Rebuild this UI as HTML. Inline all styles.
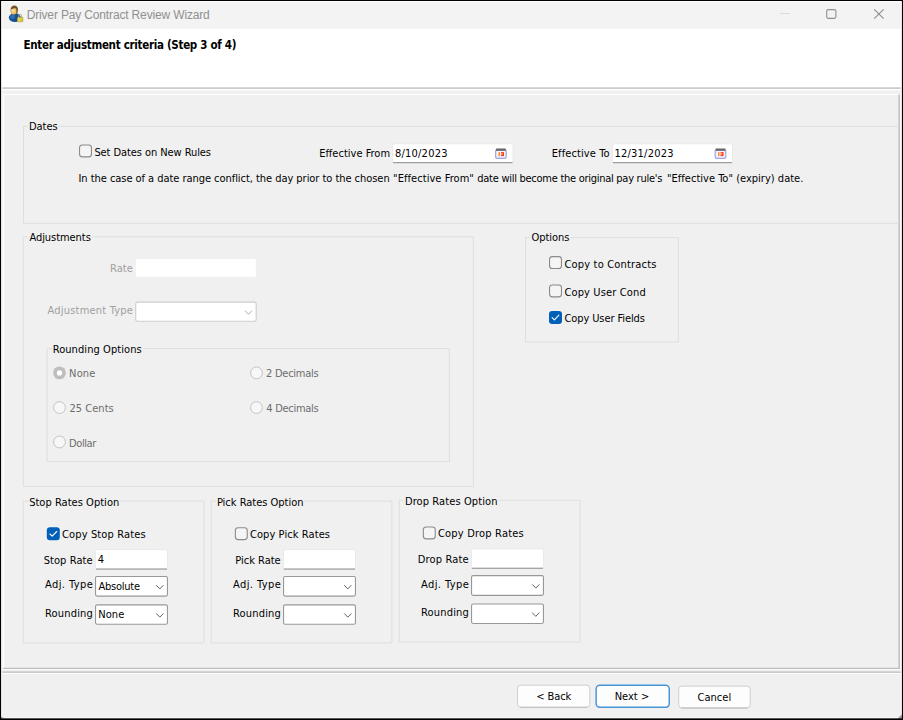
<!DOCTYPE html>
<html lang="en"><head><meta charset="utf-8"><title>Driver Pay Contract Review Wizard</title>
<style>
html,body{margin:0;padding:0;}
body{width:903px;height:720px;position:relative;overflow:hidden;background:#f0f0f0;}
#w{position:absolute;left:0;top:0;width:903px;height:720px;overflow:hidden;}
#w svg{position:absolute;left:0;top:0;display:block;}
#w span{position:absolute;display:block;white-space:nowrap;line-height:16px;height:16px;font-family:'DejaVu Sans Condensed','DejaVu Sans','Liberation Sans',sans-serif;font-size:11px;font-stretch:condensed;color:#000;}
</style></head><body><div id="w">
<svg width="903" height="720" viewBox="0 0 903 720">
<rect x="0" y="0" width="903" height="29" fill="#f3f3f3" />
<rect x="0" y="29" width="903" height="58.4" fill="#fff" />
<rect x="1" y="87.4" width="900" height="1.5" fill="#c2c2c2" />
<rect x="1" y="88.9" width="900" height="1.3" fill="#fff" />
<rect x="3" y="94" width="896" height="1" fill="#fff" />
<rect x="3" y="94" width="1" height="575" fill="#fff" />
<rect x="898.5" y="94.5" width="1.4" height="574.5" fill="#b8b8b8" />
<rect x="899.9" y="94" width="1" height="575" fill="#fafafa" />
<rect x="3" y="667.8" width="897" height="1.2" fill="#bdbdbd" />
<rect x="3" y="669" width="897" height="1" fill="#fafafa" />
<rect x="1" y="671.6" width="900.5" height="1.2" fill="#b0b0b0" />
<rect x="1" y="672.8" width="900.5" height="1.2" fill="#fff" />
<rect x="1" y="717.2" width="901" height="1.2" fill="#fafafa" />
<g transform="translate(8 5)"><ellipse cx="6.8" cy="12.6" rx="6" ry="4.3" fill="#164f8e"/><ellipse cx="4.6" cy="11.8" rx="2.6" ry="2.2" fill="#3578c0" opacity="0.75"/><ellipse cx="6.3" cy="5.1" rx="3.7" ry="4.5" fill="#7a5a2c"/><ellipse cx="5.7" cy="6.1" rx="2.7" ry="3.4" fill="#efc470"/><ellipse cx="5.2" cy="5.4" rx="1.4" ry="1.6" fill="#f8dc98"/><path d="M2.7 4.2 Q6.3 -0.8 10 3.8 Q7.6 2.6 5.6 3.4 Q3.8 3.8 2.7 4.2Z" fill="#6a4c22"/><path d="M10.7 12.6 v-1.7 a1.5 1.5 0 0 1 3 0 v1.7" fill="none" stroke="#a8a890" stroke-width="0.9"/><rect x="9.4" y="12.3" width="5.5" height="4.5" rx="0.6" fill="#dccb3a" stroke="#9f9326" stroke-width="0.5"/><rect x="10" y="12.9" width="1.6" height="3.3" fill="#f0e478" opacity="0.8"/></g>
<path d="M780 13.5 H790" stroke="#dadada" stroke-width="1"/><rect x="826.7" y="9.6" width="9.2" height="8.8" rx="1.6" fill="none" stroke="#8f8f8f" stroke-width="1.1"/><path d="M874.2 9.3 L883.6 18.7 M883.6 9.3 L874.2 18.7" stroke="#8a8a8a" stroke-width="1.05"/>
<path d="M28 126.3 H23.5 V223.3 H899 M58.5 126.3 H899" fill="none" stroke="#dedede" stroke-width="1"/>
<rect x="79.55" y="144.95" width="11.9" height="11.9" rx="2.8" fill="#f5f5f5" stroke="#8a8a8a" stroke-width="1.1"/>
<rect x="392.5" y="143.8" width="120.5" height="19" rx="2" fill="#fff" stroke="#e6e6e6" stroke-width="0.8"/>
<rect x="393" y="162.1" width="119.5" height="1.1" fill="#949494" />
<g transform="translate(495 148)"><rect x="0.6" y="1.6" width="10.6" height="8.8" rx="1.3" fill="#e6e9fb" stroke="#a6a6de" stroke-width="1.2"/><rect x="1.2" y="0.1" width="9.4" height="1" fill="#b4ae9c"/><rect x="1" y="0.9" width="9.8" height="2" fill="#6a6a74"/><rect x="2" y="3.3" width="7.8" height="4.6" fill="#fdfdff"/><rect x="3.5" y="4.1" width="1.4" height="3.9" fill="#ff7a30"/><rect x="5.9" y="4.1" width="3.1" height="3.9" fill="#ff3b10"/><rect x="5.9" y="5.3" width="1.7" height="1.2" fill="#ffd8c8"/></g>
<rect x="612.5" y="143.8" width="120" height="19" rx="2" fill="#fff" stroke="#e6e6e6" stroke-width="0.8"/>
<rect x="613" y="162.1" width="119" height="1.1" fill="#949494" />
<g transform="translate(714.6 148)"><rect x="0.6" y="1.6" width="10.6" height="8.8" rx="1.3" fill="#e6e9fb" stroke="#a6a6de" stroke-width="1.2"/><rect x="1.2" y="0.1" width="9.4" height="1" fill="#b4ae9c"/><rect x="1" y="0.9" width="9.8" height="2" fill="#6a6a74"/><rect x="2" y="3.3" width="7.8" height="4.6" fill="#fdfdff"/><rect x="3.5" y="4.1" width="1.4" height="3.9" fill="#ff7a30"/><rect x="5.9" y="4.1" width="3.1" height="3.9" fill="#ff3b10"/><rect x="5.9" y="5.3" width="1.7" height="1.2" fill="#ffd8c8"/></g>
<path d="M28 236.8 H23.3 V486.3 H473.4 V236.8 H92" fill="none" stroke="#dedede" stroke-width="1"/>
<rect x="135.8" y="259.1" width="120" height="17.7" fill="#fff" />
<rect x="135.75" y="302.15" width="120.4" height="19.1" rx="1.6" fill="#fff" stroke="#cdcdcd" stroke-width="1.1"/>
<path d="M245.2 310.9 L248.5 314.3 L251.8 310.9" fill="none" stroke="#ababab" stroke-width="1" stroke-linecap="round" stroke-linejoin="round"/>
<path d="M52 348.6 H47.1 V461.6 H449.4 V348.6 H143" fill="none" stroke="#dedede" stroke-width="1"/>
<circle cx="59.5" cy="372.9" r="6.4" fill="#bebebe"/><circle cx="59.5" cy="372.9" r="2.7" fill="#fff"/>
<circle cx="59.5" cy="407.6" r="5.9" fill="#f7f7f7" stroke="#c4c4c4" stroke-width="1"/>
<circle cx="59.5" cy="442" r="5.9" fill="#f7f7f7" stroke="#c4c4c4" stroke-width="1"/>
<circle cx="256.5" cy="372.9" r="5.9" fill="#f7f7f7" stroke="#c4c4c4" stroke-width="1"/>
<circle cx="256.5" cy="407.6" r="5.9" fill="#f7f7f7" stroke="#c4c4c4" stroke-width="1"/>
<path d="M530 237.6 H525.5 V342 H678.3 V237.6 H571" fill="none" stroke="#dedede" stroke-width="1"/>
<rect x="549.55" y="256.65" width="11.9" height="11.9" rx="2.8" fill="#f5f5f5" stroke="#8a8a8a" stroke-width="1.1"/>
<rect x="549.55" y="284.95" width="11.9" height="11.9" rx="2.8" fill="#f5f5f5" stroke="#8a8a8a" stroke-width="1.1"/>
<rect x="549" y="310.9" width="13" height="13" fill="#005fb8" rx="3.2"/>
<path d="M552.1 317.7 L554.4 319.8 L558.9 315.2" fill="none" stroke="#fff" stroke-width="1.1" stroke-linecap="round" stroke-linejoin="round"/>
<path d="M28 501.1 H23.2 V642.9 H203.9 V501.1 H120.4" fill="none" stroke="#dedede" stroke-width="1"/>
<rect x="46.8" y="527.2" width="13" height="13" fill="#005fb8" rx="3.2"/>
<path d="M49.9 534 L52.2 536.1 L56.7 531.5" fill="none" stroke="#fff" stroke-width="1.1" stroke-linecap="round" stroke-linejoin="round"/>
<rect x="95.4" y="549.7" width="72.1" height="19.5" rx="2" fill="#fff" stroke="#e6e6e6" stroke-width="0.8"/>
<rect x="95.9" y="568.5" width="71.1" height="1.1" fill="#949494" />
<rect x="95.55" y="576.45" width="71.9" height="19.7" rx="1.6" fill="#fff" stroke="#989898" stroke-width="1.1"/>
<path d="M156.5 585.5 L159.8 588.9 L163.1 585.5" fill="none" stroke="#606060" stroke-width="1" stroke-linecap="round" stroke-linejoin="round"/>
<rect x="95.55" y="604.85" width="71.9" height="19.4" rx="1.6" fill="#fff" stroke="#989898" stroke-width="1.1"/>
<path d="M156.5 613.75 L159.8 617.15 L163.1 613.75" fill="none" stroke="#606060" stroke-width="1" stroke-linecap="round" stroke-linejoin="round"/>
<path d="M216 501.1 H211.2 V642.9 H391.9 V501.1 H304.6" fill="none" stroke="#dedede" stroke-width="1"/>
<rect x="235.35" y="527.75" width="11.9" height="11.9" rx="2.8" fill="#f5f5f5" stroke="#8a8a8a" stroke-width="1.1"/>
<rect x="283.4" y="549.7" width="72.1" height="19.5" rx="2" fill="#fff" stroke="#e6e6e6" stroke-width="0.8"/>
<rect x="283.9" y="568.5" width="71.1" height="1.1" fill="#949494" />
<rect x="283.55" y="576.45" width="71.9" height="19.7" rx="1.6" fill="#fff" stroke="#989898" stroke-width="1.1"/>
<path d="M344.5 585.5 L347.8 588.9 L351.1 585.5" fill="none" stroke="#606060" stroke-width="1" stroke-linecap="round" stroke-linejoin="round"/>
<rect x="283.55" y="604.85" width="71.9" height="19.4" rx="1.6" fill="#fff" stroke="#989898" stroke-width="1.1"/>
<path d="M344.5 613.75 L347.8 617.15 L351.1 613.75" fill="none" stroke="#606060" stroke-width="1" stroke-linecap="round" stroke-linejoin="round"/>
<path d="M404 500.3 H399.2 V642.1 H579.9 V500.3 H498.6" fill="none" stroke="#dedede" stroke-width="1"/>
<rect x="423.35" y="526.95" width="11.9" height="11.9" rx="2.8" fill="#f5f5f5" stroke="#8a8a8a" stroke-width="1.1"/>
<rect x="471.4" y="548.9" width="72.1" height="19.5" rx="2" fill="#fff" stroke="#e6e6e6" stroke-width="0.8"/>
<rect x="471.9" y="567.7" width="71.1" height="1.1" fill="#949494" />
<rect x="471.55" y="575.65" width="71.9" height="19.7" rx="1.6" fill="#fff" stroke="#989898" stroke-width="1.1"/>
<path d="M532.5 584.7 L535.8 588.1 L539.1 584.7" fill="none" stroke="#606060" stroke-width="1" stroke-linecap="round" stroke-linejoin="round"/>
<rect x="471.55" y="604.05" width="71.9" height="19.4" rx="1.6" fill="#fff" stroke="#989898" stroke-width="1.1"/>
<path d="M532.5 612.95 L535.8 616.35 L539.1 612.95" fill="none" stroke="#606060" stroke-width="1" stroke-linecap="round" stroke-linejoin="round"/>
<rect x="517.5" y="685.2" width="72.3" height="22.1" rx="3.2" fill="#fdfdfd" stroke="#cfcfcf" stroke-width="1"/>
<path d="M520 707.3 H587.3" stroke="#bcbcbc" stroke-width="1"/>
<rect x="596.12" y="685.33" width="73.15" height="21.85" rx="3.6" fill="#fdfdfd" stroke="#4595d8" stroke-width="1.45"/>
<rect x="678.7" y="686.1" width="71.5" height="21.9" rx="3.2" fill="#fdfdfd" stroke="#cfcfcf" stroke-width="1"/>
<path d="M681.2 708 H747.7" stroke="#bcbcbc" stroke-width="1"/>
<rect x="1" y="1" width="1.2" height="717" fill="#fdfdfd" />
<rect x="900.7" y="1" width="1.3" height="717" fill="#fdfdfd" />
<rect x="1" y="0.9" width="901" height="1.3" fill="#fdfdfd" />
<path d="M897.4 718.4 L901.9 714.4 L901.9 718.4Z" fill="#999"/><path d="M1.1 716.6 L4.8 718.4 L1.1 718.4Z" fill="#a0a0a0"/>
<rect x="0" y="0" width="903" height="1" fill="#000" />
<rect x="0" y="0" width="1.1" height="720" fill="#000" />
<rect x="901.9" y="0" width="1.1" height="720" fill="#000" />
<rect x="0" y="718.35" width="903" height="1.65" fill="#000" />
</svg>
<span id="t0" style="left:26.65px;top:6.6px;font-family:'Liberation Sans',sans-serif;font-size:12px;color:#909090;letter-spacing:-0.153px;">Driver Pay Contract Review Wizard</span>
<span id="t1" style="left:23.49px;top:36.6px;font-size:11.5px;font-weight:bold;letter-spacing:-0.299px;">Enter adjustment criteria (Step 3 of 4)</span>
<span id="t2" style="left:28.91px;top:119.4px;letter-spacing:-0.024px;">Dates</span>
<span id="t3" style="left:94.38px;top:144.9px;letter-spacing:-0.075px;">Set Dates on New Rules</span>
<span id="t4" style="left:319.13px;top:146.4px;letter-spacing:0.005px;">Effective From</span>
<span id="t5" style="left:394.92px;top:146.3px;letter-spacing:0.231px;">8/10/2023</span>
<span id="t6" style="left:551.71px;top:146.4px;letter-spacing:0.101px;">Effective To</span>
<span id="t7" style="left:614.43px;top:146.3px;letter-spacing:0.228px;">12/31/2023</span>
<span id="t8" style="left:78.49px;top:170.9px;letter-spacing:-0.045px;">In the case of a date range conflict, the day prior to the chosen</span>
<span id="t9" style="left:393.12px;top:170.9px;letter-spacing:0.054px;">"Effective From"</span>
<span id="t10" style="left:477.32px;top:170.9px;letter-spacing:-0.272px;">date will become the original pay rule's</span>
<span id="t11" style="left:667.05px;top:170.9px;letter-spacing:0.012px;">"Effective To" (expiry) date.</span>
<span id="t12" style="left:29.4px;top:230.1px;letter-spacing:-0.052px;">Adjustments</span>
<span id="t13" style="left:110.11px;top:261.4px;color:#a0a0a0;letter-spacing:0.023px;">Rate</span>
<span id="t14" style="left:47.6px;top:303px;color:#a0a0a0;letter-spacing:0.194px;">Adjustment Type</span>
<span id="t15" style="left:52.68px;top:342.1px;letter-spacing:0.079px;">Rounding Options</span>
<span id="t16" style="left:69.11px;top:366.4px;color:#6d6d6d;letter-spacing:0.153px;">None</span>
<span id="t17" style="left:69.53px;top:401.4px;color:#6d6d6d;letter-spacing:0.018px;">25 Cents</span>
<span id="t18" style="left:69.11px;top:436px;color:#6d6d6d;letter-spacing:-0.441px;">Dollar</span>
<span id="t19" style="left:265.99px;top:366.4px;color:#6d6d6d;letter-spacing:-0.242px;">2 Decimals</span>
<span id="t20" style="left:266.28px;top:401.4px;color:#6d6d6d;letter-spacing:-0.274px;">4 Decimals</span>
<span id="t21" style="left:531.43px;top:230.4px;letter-spacing:-0.019px;">Options</span>
<span id="t22" style="left:564.43px;top:256.6px;letter-spacing:0.180px;">Copy to Contracts</span>
<span id="t23" style="left:564.43px;top:284.9px;letter-spacing:0.138px;">Copy User Cond</span>
<span id="t24" style="left:564.43px;top:311px;letter-spacing:-0.093px;">Copy User Fields</span>
<span id="t25" style="left:29.15px;top:495.2px;letter-spacing:0.029px;">Stop Rates Option</span>
<span id="t26" style="left:61.97px;top:527.2px;letter-spacing:0.142px;">Copy Stop Rates</span>
<span id="t27" style="left:43.66px;top:552.8px;letter-spacing:0.074px;">Stop Rate</span>
<span id="t28" style="left:97.7px;top:552.4px;">4</span>
<span id="t29" style="left:45px;top:577.4px;letter-spacing:0.422px;">Adj. Type</span>
<span id="t30" style="left:98.4px;top:579.4px;letter-spacing:-0.239px;">Absolute</span>
<span id="t31" style="left:44.91px;top:605.7px;letter-spacing:0.193px;">Rounding</span>
<span id="t32" style="left:98.26px;top:607.4px;letter-spacing:0.066px;">None</span>
<span id="t33" style="left:216.91px;top:495.2px;letter-spacing:-0.009px;">Pick Rates Option</span>
<span id="t34" style="left:249.97px;top:527.2px;letter-spacing:0.081px;">Copy Pick Rates</span>
<span id="t35" style="left:235.33px;top:552.8px;letter-spacing:-0.014px;">Pick Rate</span>
<span id="t36" style="left:233px;top:577.4px;letter-spacing:0.422px;">Adj. Type</span>
<span id="t37" style="left:232.91px;top:605.7px;letter-spacing:0.193px;">Rounding</span>
<span id="t38" style="left:404.91px;top:494.4px;letter-spacing:0.103px;">Drop Rates Option</span>
<span id="t39" style="left:437.97px;top:526.4px;letter-spacing:0.195px;">Copy Drop Rates</span>
<span id="t40" style="left:417.75px;top:552px;letter-spacing:0.148px;">Drop Rate</span>
<span id="t41" style="left:421px;top:576.6px;letter-spacing:0.422px;">Adj. Type</span>
<span id="t42" style="left:420.91px;top:604.9px;letter-spacing:0.193px;">Rounding</span>
<span id="t43" style="left:536.14px;top:689.4px;letter-spacing:-0.060px;">&lt; Back</span>
<span id="t44" style="left:614.71px;top:689.4px;letter-spacing:0.000px;">Next &gt;</span>
<span id="t45" style="left:697.53px;top:690px;letter-spacing:0.016px;">Cancel</span>
</div></body></html>
